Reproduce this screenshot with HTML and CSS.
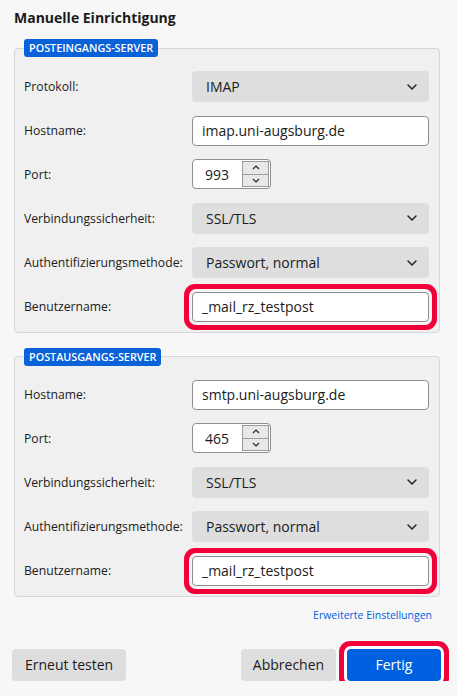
FILE: index.html
```html
<!DOCTYPE html>
<html lang="de">
<head>
<meta charset="utf-8">
<title>Manuelle Einrichtigung</title>
<link rel="stylesheet" href="styles.css">
</head>
<body>
<div class="page">
  <h1 class="title">Manuelle Einrichtigung</h1>

  <fieldset class="group">
    <legend class="badge">POSTEINGANGS-SERVER</legend>
    <div class="rows">
      <label class="lbl">Protokoll:</label>
      <div class="select"><span>IMAP</span><svg class="chev" width="10" height="6" viewBox="0 0 10 6"><path d="M1 1l4 4 4-4" fill="none" stroke="#222" stroke-width="1.5" stroke-linecap="round" stroke-linejoin="round"/></svg></div>

      <label class="lbl">Hostname:</label>
      <div class="input">imap.uni-augsburg.de</div>

      <label class="lbl">Port:</label>
      <div class="port"><span class="num">993</span><span class="spin"><span class="sb"><svg width="8" height="5" viewBox="0 0 8 5"><path d="M1 4l3-3 3 3" fill="none" stroke="#222" stroke-width="1.2"/></svg></span><span class="sb"><svg width="8" height="5" viewBox="0 0 8 5"><path d="M1 1l3 3 3-3" fill="none" stroke="#222" stroke-width="1.2"/></svg></span></span></div>

      <label class="lbl">Verbindungssicherheit:</label>
      <div class="select"><span>SSL/TLS</span><svg class="chev" width="10" height="6" viewBox="0 0 10 6"><path d="M1 1l4 4 4-4" fill="none" stroke="#222" stroke-width="1.5" stroke-linecap="round" stroke-linejoin="round"/></svg></div>

      <label class="lbl">Authentifizierungsmethode:</label>
      <div class="select"><span>Passwort, normal</span><svg class="chev" width="10" height="6" viewBox="0 0 10 6"><path d="M1 1l4 4 4-4" fill="none" stroke="#222" stroke-width="1.5" stroke-linecap="round" stroke-linejoin="round"/></svg></div>

      <label class="lbl">Benutzername:</label>
      <div class="input marked">_mail_rz_testpost</div>
    </div>
  </fieldset>

  <fieldset class="group second">
    <legend class="badge">POSTAUSGANGS-SERVER</legend>
    <div class="rows">
      <label class="lbl">Hostname:</label>
      <div class="input">smtp.uni-augsburg.de</div>

      <label class="lbl">Port:</label>
      <div class="port"><span class="num">465</span><span class="spin"><span class="sb"><svg width="8" height="5" viewBox="0 0 8 5"><path d="M1 4l3-3 3 3" fill="none" stroke="#222" stroke-width="1.2"/></svg></span><span class="sb"><svg width="8" height="5" viewBox="0 0 8 5"><path d="M1 1l3 3 3-3" fill="none" stroke="#222" stroke-width="1.2"/></svg></span></span></div>

      <label class="lbl">Verbindungssicherheit:</label>
      <div class="select"><span>SSL/TLS</span><svg class="chev" width="10" height="6" viewBox="0 0 10 6"><path d="M1 1l4 4 4-4" fill="none" stroke="#222" stroke-width="1.5" stroke-linecap="round" stroke-linejoin="round"/></svg></div>

      <label class="lbl">Authentifizierungsmethode:</label>
      <div class="select"><span>Passwort, normal</span><svg class="chev" width="10" height="6" viewBox="0 0 10 6"><path d="M1 1l4 4 4-4" fill="none" stroke="#222" stroke-width="1.5" stroke-linecap="round" stroke-linejoin="round"/></svg></div>

      <label class="lbl">Benutzername:</label>
      <div class="input marked">_mail_rz_testpost</div>
    </div>
  </fieldset>

  <div class="linkrow"><a class="link">Erweiterte Einstellungen</a></div>
</div>

<div class="footer">
  <button class="btn">Erneut testen</button>
  <div class="right">
    <button class="btn cancel">Abbrechen</button>
    <button class="btn primary">Fertig</button>
  </div>
</div>
</body>
</html>
```

FILE: styles.css
```css
html, body {
  margin: 0;
  padding: 0;
  background: #f7f7f7;
  font-family: "Open Sans", "Noto Sans", sans-serif;
  color: #1b1b1b;
}

.page {
  padding: 8px 17px 0 14px;
}

.title {
  margin: 0;
  font-size: 14px;
  line-height: 20px;
  font-weight: 700;
  color: #1b1b1b;
}

.group {
  margin: 11px 0 0 0;
  padding: 14px 10px 10px 9px;
  border: 1px solid #d6d6d6;
  border-radius: 4px;
  background: #f0f0f0;
  min-width: 0;
}

.group.second {
  margin-top: 15px;
}

.badge {
  padding: 0 5px;
  height: 18px;
  line-height: 18px;
  background: #0a62d8;
  color: #fff;
  font-size: 10.8px;
  font-weight: 600;
  border-radius: 3px;
}

.rows {
  display: grid;
  grid-template-columns: 168px 1fr;
  row-gap: 13.5px;
  align-items: center;
}

.lbl {
  font-size: 12.2px;
  color: #1b1b1b;
}

.select {
  height: 31px;
  border-radius: 4px;
  background: #dedede;
  display: flex;
  align-items: center;
  justify-content: space-between;
  padding: 0 12px 0 14px;
  font-size: 14px;
  box-sizing: border-box;
}

.chev {
  display: block;
}

.input {
  height: 30px;
  box-sizing: border-box;
  border: 1px solid #8f8f8f;
  border-radius: 4px;
  background: #fff;
  display: flex;
  align-items: center;
  padding: 0 9px;
  font-size: 14px;
}

.input.marked {
  box-shadow: 0 0 0 3px #f4f4f4, 0 0 0 8px #f2003a;
}

.port {
  width: 79px;
  height: 30px;
  box-sizing: border-box;
  border: 1px solid #8f8f8f;
  border-radius: 4px;
  background: #fff;
  display: flex;
  align-items: center;
  justify-content: space-between;
  padding: 0 1px 0 12px;
  font-size: 14px;
}

.spin {
  display: flex;
  flex-direction: column;
  width: 27px;
  height: 26px;
  border: 1px solid #9a9a9a;
  box-sizing: border-box;
}

.sb {
  flex: 1;
  background: #e8e8e8;
  display: flex;
  align-items: center;
  justify-content: center;
}

.sb + .sb {
  border-top: 1px solid #9a9a9a;
}

.sb svg {
  display: block;
}

.linkrow {
  display: flex;
  justify-content: flex-end;
  padding: 10px 8px 0 0;
}

.link {
  font-size: 10.5px;
  line-height: 16px;
  color: #0060df;
}

.footer {
  display: flex;
  justify-content: space-between;
  padding: 26px 16px 0 12px;
}

.right {
  display: flex;
  gap: 11px;
}

.btn {
  height: 32px;
  border: none;
  border-radius: 4px;
  background: #dedede;
  color: #1b1b1b;
  font-family: "Open Sans", "Noto Sans", sans-serif;
  font-size: 14px;
  padding: 0 13px;
}

.btn.cancel {
  width: 95px;
  padding: 0;
}

.btn.primary {
  width: 94px;
  background: #0061e0;
  color: #fff;
  box-shadow: 0 0 0 3px #fff, 0 0 0 8px #f2003a;
}
```
